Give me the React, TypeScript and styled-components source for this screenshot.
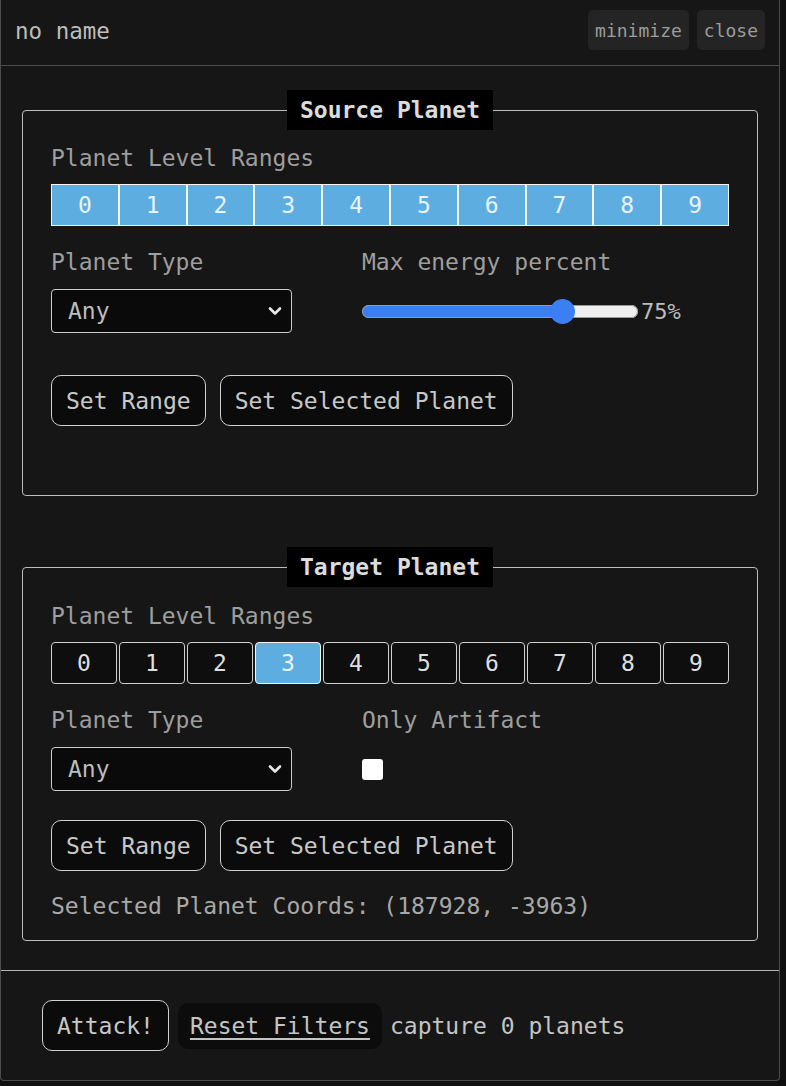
import React, { useState } from "react";
import styled, { createGlobalStyle } from "styled-components";

const Global = createGlobalStyle`
  html, body { margin: 0; padding: 0; background: #101010; }
  body { font-family: "DejaVu Sans Mono", "Liberation Mono", monospace; }
  * { box-sizing: border-box; }
`;

const Window = styled.div`
  width: 780px;
  background: #161616;
  border: 1px solid #4c4c4c;
  border-top: none;
  border-radius: 0 0 4px 4px;
  color: #bdbdbd;
`;

const Header = styled.div`
  height: 66px;
  display: flex;
  align-items: center;
  justify-content: space-between;
  padding: 0 14px 0 14px;
  border-bottom: 1px solid #4c4c4c;
`;

const Title = styled.span`
  font-size: 22.5px;
  color: #bdbdbd;
  margin-top: -4px;
`;

const HeaderButtons = styled.div`
  display: flex;
  gap: 8px;
  margin-top: -5px;
`;

const HeaderButton = styled.button`
  height: 40px;
  padding: 0 7px;
  border: none;
  border-radius: 5px;
  background: #242424;
  color: #9c9c9c;
  font-family: inherit;
  font-size: 18px;
`;

const Content = styled.div`
  padding: 24px 21px 29px 21px;
  display: flex;
  flex-direction: column;
  gap: 51px;
`;

const Fieldset = styled.fieldset`
  margin: 0;
  padding: 0 28px 20px 28px;
  border: 1px solid #bcbcbc;
  border-radius: 4px;
  display: flex;
  flex-direction: column;
`;

const Legend = styled.legend`
  margin: 0 auto;
  height: 40px;
  line-height: 40px;
  padding: 0 13px;
  background: #000;
  color: #dcdcdc;
  font-weight: bold;
  font-size: 23px;
`;

const Label = styled.div<{ $mt?: number }>`
  font-size: 23px;
  line-height: 28px;
  color: #9e9e9e;
  margin-top: ${(p) => p.$mt ?? 0}px;
`;

const LevelRow = styled.div<{ $joined?: boolean }>`
  display: flex;
  gap: ${(p) => (p.$joined ? 0 : 2)}px;
  margin-top: 12px;
`;

const LevelCell = styled.button<{ $active?: boolean; $joined?: boolean }>`
  flex: 1;
  height: 42px;
  padding: 0;
  border: 1px solid ${(p) => (p.$active ? "#f4f4f4" : "#d0d0d0")};
  border-radius: ${(p) => (p.$joined ? 0 : 4)}px;
  background: ${(p) => (p.$active ? "#5eade0" : "#0e0e0e")};
  color: ${(p) => (p.$active ? "#e8f3fb" : "#dedede")};
  font-family: inherit;
  font-size: 23px;
`;

const Grid = styled.div`
  display: grid;
  grid-template-columns: 311px 1fr;
  margin-top: 22px;
`;

const Column = styled.div`
  display: flex;
  flex-direction: column;
  gap: 13px;
`;

const ControlRow = styled.div`
  height: 44px;
  display: flex;
  align-items: center;
`;

const SelectWrap = styled.div`
  position: relative;
  width: 241px;
  height: 44px;
`;

const Select = styled.select`
  appearance: none;
  -webkit-appearance: none;
  width: 100%;
  height: 100%;
  padding: 0 0 0 16px;
  background: #0a0a0a;
  border: 1px solid #cbcbcb;
  border-radius: 4px;
  color: #bdbdbd;
  font-family: inherit;
  font-size: 23px;
`;

const Chevron = styled.svg`
  position: absolute;
  right: 10px;
  top: 17px;
  pointer-events: none;
`;

const Range = styled.input`
  -webkit-appearance: none;
  appearance: none;
  width: 276px;
  height: 25px;
  margin: 0;
  background: transparent;

  &::-webkit-slider-runnable-track {
    height: 13px;
    border-radius: 7px;
    background: var(--track);
    box-shadow: inset 0 0 0 1px #9a9a9a;
  }
  &::-webkit-slider-thumb {
    -webkit-appearance: none;
    width: 25px;
    height: 25px;
    margin-top: -6px;
    border-radius: 50%;
    background: #3b7ff2;
    border: none;
  }
`;

const RangeValue = styled.span`
  font-size: 22px;
  color: #bdbdbd;
  margin-left: 3px;
`;

const Checkbox = styled.input`
  appearance: none;
  -webkit-appearance: none;
  width: 21px;
  height: 21px;
  margin: 0;
  background: #fff;
  border-radius: 3px;
`;

const ButtonRow = styled.div<{ $mt: number }>`
  display: flex;
  gap: 14px;
  margin-top: ${(p) => p.$mt}px;
`;

const OutlineButton = styled.button`
  height: 51px;
  padding: 0 14px;
  background: #0b0b0b;
  border: 1px solid #d0d0d0;
  border-radius: 10px;
  color: #c8c8c8;
  font-family: inherit;
  font-size: 23px;
  white-space: nowrap;
`;

const Coords = styled.div`
  margin-top: 21px;
  min-height: 28px;
  font-size: 23px;
  line-height: 28px;
  color: #a8a8a8;
`;

const Footer = styled.div`
  border-top: 1px solid #b4b4b4;
  padding: 29px 41px 29px 41px;
  display: flex;
  align-items: center;
`;

const LinkButton = styled.button`
  height: 46px;
  margin: 0 8px 0 9px;
  padding: 0 12px;
  border: none;
  border-radius: 10px;
  background: #0c0c0c;
  color: #c4c4c4;
  text-decoration: underline;
  text-underline-offset: 4px;
  font-family: inherit;
  font-size: 23px;
`;

const FooterText = styled.span`
  font-size: 23px;
  color: #c4c4c4;
`;

const LEVELS = [0, 1, 2, 3, 4, 5, 6, 7, 8, 9];

function PlanetTypeSelect() {
  return (
    <SelectWrap>
      <Select defaultValue="any">
        <option value="any">Any</option>
      </Select>
      <Chevron width="14" height="10" viewBox="0 0 14 10">
        <path d="M2 2.5 L7 7.5 L12 2.5" fill="none" stroke="#e8e8e8" strokeWidth="2.6" strokeLinecap="round" strokeLinejoin="round" />
      </Chevron>
    </SelectWrap>
  );
}

export default function App() {
  const [energy] = useState(75);
  const trackPct = (12.5 + (energy / 100) * (276 - 25)) / 276 * 100;
  return (
    <>
      <Global />
      <Window>
        <Header>
          <Title>no name</Title>
          <HeaderButtons>
            <HeaderButton>minimize</HeaderButton>
            <HeaderButton>close</HeaderButton>
          </HeaderButtons>
        </Header>
        <Content>
          <Fieldset>
            <Legend>Source Planet</Legend>
            <Label $mt={14}>Planet Level Ranges</Label>
            <LevelRow $joined>
              {LEVELS.map((l) => (
                <LevelCell key={l} $active $joined>{l}</LevelCell>
              ))}
            </LevelRow>
            <Grid>
              <Column>
                <Label>Planet Type</Label>
                <PlanetTypeSelect />
              </Column>
              <Column>
                <Label>Max energy percent</Label>
                <ControlRow>
                  <Range
                    type="range"
                    min={0}
                    max={100}
                    defaultValue={energy}
                    style={{ ["--track" as any]: `linear-gradient(to right, #3b7ff2 ${trackPct}%, #efefef ${trackPct}%)` }}
                  />
                  <RangeValue>{energy}%</RangeValue>
                </ControlRow>
              </Column>
            </Grid>
            <ButtonRow $mt={42}>
              <OutlineButton>Set Range</OutlineButton>
              <OutlineButton>Set Selected Planet</OutlineButton>
            </ButtonRow>
            <Coords />
          </Fieldset>

          <Fieldset>
            <Legend>Target Planet</Legend>
            <Label $mt={15}>Planet Level Ranges</Label>
            <LevelRow>
              {LEVELS.map((l) => (
                <LevelCell key={l} $active={l === 3}>{l}</LevelCell>
              ))}
            </LevelRow>
            <Grid>
              <Column>
                <Label>Planet Type</Label>
                <PlanetTypeSelect />
              </Column>
              <Column>
                <Label>Only Artifact</Label>
                <ControlRow>
                  <Checkbox type="checkbox" />
                </ControlRow>
              </Column>
            </Grid>
            <ButtonRow $mt={29}>
              <OutlineButton>Set Range</OutlineButton>
              <OutlineButton>Set Selected Planet</OutlineButton>
            </ButtonRow>
            <Coords>Selected Planet Coords: (187928, -3963)</Coords>
          </Fieldset>
        </Content>
        <Footer>
          <OutlineButton>Attack!</OutlineButton>
          <LinkButton>Reset Filters</LinkButton>
          <FooterText>capture 0 planets</FooterText>
        </Footer>
      </Window>
    </>
  );
}
